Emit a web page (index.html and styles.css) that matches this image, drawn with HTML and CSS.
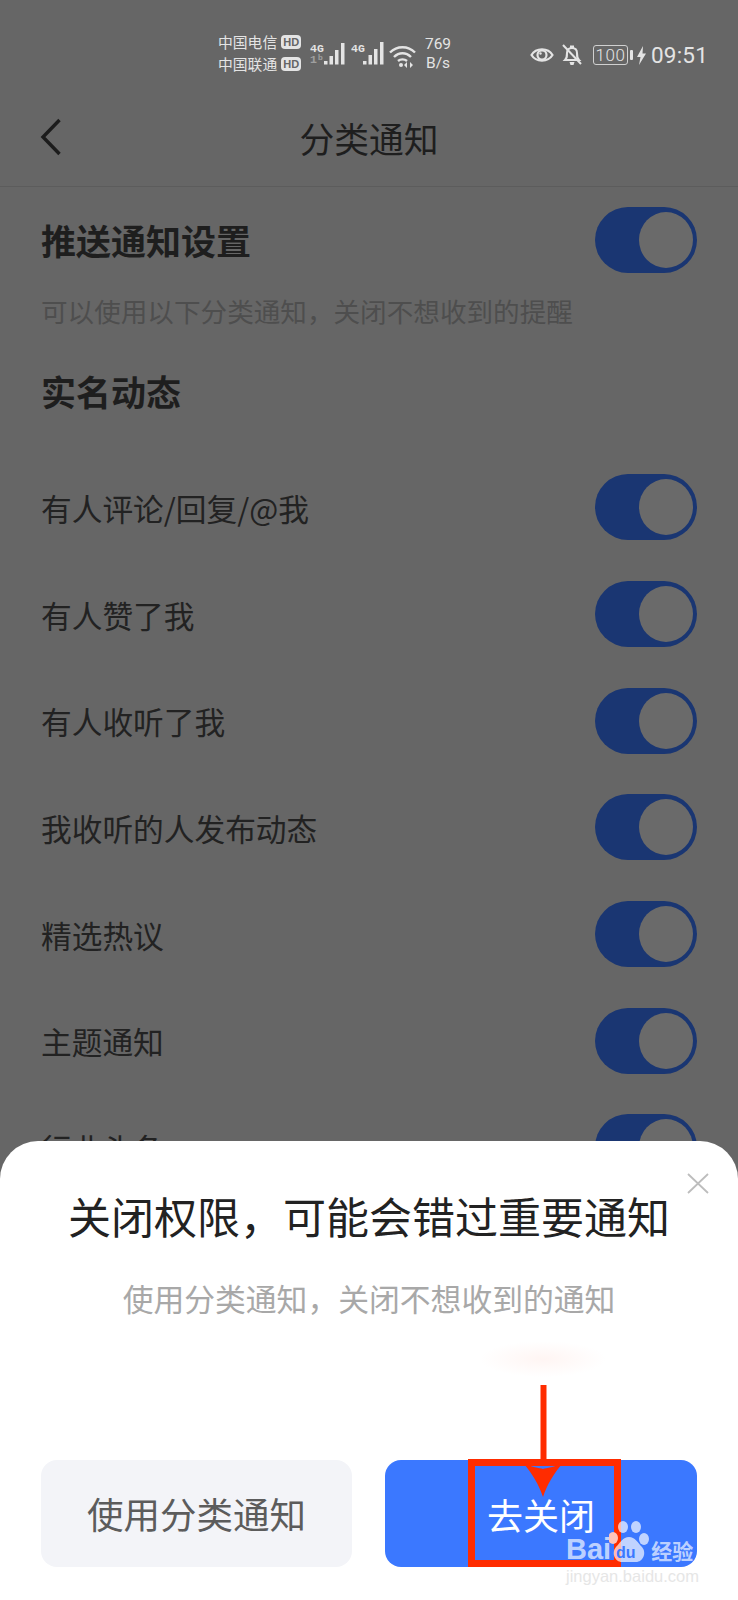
FILE: index.html
```html
<!DOCTYPE html>
<html lang="zh-CN">
<head>
<meta charset="utf-8">
<title>分类通知</title>
<link rel="stylesheet" href="styles.css">
</head>
<body>
<div class="page">
  <header class="status">
    <div class="carriers">
      <div class="carrier"><span>中国电信</span><b class="hd">HD</b></div>
      <div class="carrier"><span>中国联通</span><b class="hd">HD</b></div>
    </div>
    <svg class="signal" width="40" height="26" viewBox="0 0 40 26"><text x="0" y="11" class="tiny">4G</text><text x="0" y="22" class="tiny dim">1ᵇ</text><g fill="#e4e4e4"><rect x="14" y="20" width="3.500" height="3.500"/><rect x="19.500" y="15" width="3.500" height="8.500"/><rect x="25" y="9" width="3.500" height="14.500"/><rect x="31" y="2" width="3.500" height="21.500"/></g></svg>
    <svg class="signal" width="36" height="26" viewBox="0 0 36 26"><text x="0" y="11" class="tiny">4G</text><g fill="#e4e4e4"><rect x="12" y="20" width="3.500" height="3.500"/><rect x="17.500" y="14" width="3.500" height="9.500"/><rect x="23" y="8" width="3.500" height="15.500"/><rect x="29" y="1" width="3.500" height="22.500"/></g></svg>
    <svg class="wifi" width="27" height="24" viewBox="0 0 27 24"><g fill="none" stroke="#e4e4e4" stroke-width="2.4"><path d="M1 8.5C8 1.5 19 1.500 26 8.500"/><path d="M5 13C10 8 17 8 22 13"/><path d="M9 17C11.500 14.800 15.500 14.800 18 17"/></g><circle cx="12" cy="21" r="2" fill="#e4e4e4"/><path d="M18 18v6l-3-3zM21 18v6l3-3z" fill="#e4e4e4"/></svg>
    <div class="speed"><span>769</span><span>B/s</span></div>
    <div class="status-right">
      <svg width="24" height="18" viewBox="0 0 24 18"><path d="M1.500 9C6 1.500 18 1.500 22.500 9C18 16.500 6 16.500 1.500 9Z" fill="none" stroke="#e4e4e4" stroke-width="2.200"/><circle cx="12" cy="9" r="4.500" fill="none" stroke="#e4e4e4" stroke-width="2.200"/><circle cx="10.500" cy="7.500" r="1.200" fill="#e4e4e4"/></svg>
      <svg class="bell" width="20" height="22" viewBox="0 0 20 22"><g fill="none" stroke="#e4e4e4" stroke-width="2"><path d="M3 16h14c-2-2-2-3-2-7 0-3-2-5-5-5S5 6 5 9c0 4 0 5-2 7Z"/><path d="M1 1l18 19"/></g><path d="M8 1.500h4v2.500h-4zM7.500 18h5l-1 3h-3z" fill="#e4e4e4"/></svg>
      <div class="battery"><span>100</span></div><i class="nub"></i>
      <svg class="bolt" width="9" height="19" viewBox="0 0 9 19"><path d="M6 0L0 11h3.500L2 19l7-11.500H5.500Z" fill="#e4e4e4"/></svg>
      <span class="clock">09:51</span>
    </div>
  </header>

  <nav class="nav">
    <svg class="back" width="22" height="38" viewBox="0 0 22 38"><path d="M19.500 2L3 19l16.500 17" fill="none" stroke="#1c1c1c" stroke-width="3.400"/></svg>
    <h1>分类通知</h1>
  </nav>

  <main class="content">
    <div class="head-row"><h2>推送通知设置</h2><div class="toggle"><i></i></div></div>
    <p class="hint">可以使用以下分类通知，关闭不想收到的提醒</p>
    <h2 class="section">实名动态</h2>
    <ul class="rows">
      <li><span>有人评论/回复/@我</span><div class="toggle"><i></i></div></li>
      <li><span>有人赞了我</span><div class="toggle"><i></i></div></li>
      <li><span>有人收听了我</span><div class="toggle"><i></i></div></li>
      <li><span>我收听的人发布动态</span><div class="toggle"><i></i></div></li>
      <li><span>精选热议</span><div class="toggle"><i></i></div></li>
      <li><span>主题通知</span><div class="toggle"><i></i></div></li>
      <li><span>行业头条</span><div class="toggle"><i></i></div></li>
    </ul>
  </main>

  <section class="sheet">
    <svg class="close" width="22" height="21" viewBox="0 0 22 21"><path d="M1 1l20 19M21 1L1 20" fill="none" stroke="#bdbdbd" stroke-width="1.800"/></svg>
    <h3>关闭权限，可能会错过重要通知</h3>
    <p>使用分类通知，关闭不想收到的通知</p>
    <div class="actions">
      <button class="btn ghost">使用分类通知</button>
      <button class="btn primary">去关闭</button>
    </div>
    <div class="smudge"></div>
    <div class="redbox"></div>
    <svg class="arrow" width="44" height="114" viewBox="0 0 44 114"><path d="M19.500 0h6v80h-6z" fill="#ff2c00"/><path d="M2 78C10 82 19 83 22 84C25 83 34 82 42 78C33 88 26 100 22 112C18 100 11 88 2 78Z" fill="#ff2c00"/></svg>
    <div class="watermark">
      <div class="wm-top">
        <span class="bai">Bai</span>
        <svg class="paw" width="40" height="43" viewBox="0 0 40 43"><g fill="#fff" fill-opacity=".68"><ellipse cx="4" cy="17" rx="5" ry="6" fill="#ffc4bb" fill-opacity="1"/><ellipse cx="14" cy="6" rx="5" ry="6"/><ellipse cx="27" cy="6" rx="5" ry="6"/><ellipse cx="35" cy="18" rx="5" ry="6"/><path d="M20 16c6 0 9 6 13 10 5 6 1 15-6 15H13C6 41 2 32 7 26c4-4 7-10 13-10Z"/></g><text x="7" y="37" class="du">du</text></svg>
        <span class="jy">经验</span>
      </div>
      <div class="wm-url">jingyan.baidu.com</div>
    </div>
  </section>
</div>
</body>
</html>
```

FILE: styles.css
```css
* { box-sizing: border-box; }
html, body { margin: 0; padding: 0; }
body { font-family: "Noto Sans CJK SC", "Noto Sans", sans-serif; background: #666; }
.page { position: relative; width: 738px; height: 1600px; overflow: hidden; background: #666; color: #1e1e1e; }

/* status bar */
.status { height: 100px; padding: 30px 30px 0 218px; display: flex; align-items: flex-start; color: #e4e4e4; }
.carriers { width: 86px; padding-top: 1px; }
.carrier { display: flex; align-items: center; height: 22px; font-size: 14.800px; line-height: 22px; }
.hd { margin-left: 4px; width: 20px; height: 14px; border-radius: 4px; background: #e4e4e4; color: #666; font: bold 11px/14px "Liberation Sans", sans-serif; text-align: center; }
.signal { margin: 11px 0 0 6px; flex: none; }
.signal + .signal { margin-left: 1px; }
.wifi { margin: 14px 0 0 2px; flex: none; }
.tiny { font: bold 11.500px "Liberation Mono", monospace; fill: #e4e4e4; }
.dim { opacity: .45; }
.speed { width: 34px; margin: 5px 0 0 5px; display: flex; flex-direction: column; align-items: center; font: 15.500px/19px "Roboto", sans-serif; }
.status-right { margin-left: auto; margin-top: 10px; display: flex; align-items: center; height: 30px; }
.bell { margin-left: 8px; }
.battery { margin-left: 11px; width: 35px; height: 20px; border: 1.500px solid #d0d0d0; border-radius: 3px; display: flex; align-items: center; justify-content: center; font: 300 17px/1 "Roboto", sans-serif; letter-spacing: .5px; }
.nub { margin-left: 2px; width: 3px; height: 10px; border-radius: 1px; background: #e4e4e4; }
.bolt { margin-left: 4px; }
.clock { margin-left: 5px; font: 400 22.500px/30px "Roboto", sans-serif; letter-spacing: .2px; }

/* navigation */
.nav { position: relative; height: 87px; border-bottom: 1px solid #5c5c5c; display: flex; align-items: center; justify-content: center; padding-bottom: 10px; }
.nav h1 { margin: 0; font-size: 34.800px; line-height: 48px; font-weight: 400; }
.back { position: absolute; left: 40px; top: 18px; }

/* content */
.content { padding: 20px 41px 0; }
.head-row { display: flex; align-items: center; justify-content: space-between; }
h2 { margin: 0; font-size: 35px; line-height: 64px; font-weight: 700; }
.hint { margin: 16px 0 0; font-size: 26.600px; line-height: 44px; color: #4e4e4e; }
.section { margin-top: 34px; line-height: 48px; }
.rows { list-style: none; margin: 39px 0 0; padding: 0; }
.rows li { height: 106.700px; display: flex; align-items: center; justify-content: space-between; font-size: 30.700px; color: #222; }
.toggle { width: 102px; height: 66px; border-radius: 33px; background: #1a3672; display: flex; align-items: center; justify-content: flex-end; padding-right: 4px; flex: none; }
.toggle i { width: 54px; height: 56px; border-radius: 50%; background: #6a6a6a; }

/* sheet */
.sheet { position: absolute; left: 0; right: 0; bottom: 0; height: 459px; background: #fff; border-radius: 38px 38px 0 0; display: flex; flex-direction: column; align-items: center; }
.close { position: absolute; left: 687px; top: 32px; }
.sheet h3 { margin: 42px 0 0; font-size: 43px; line-height: 64px; font-weight: 400; color: #222; white-space: nowrap; }
.sheet p { margin: 29px 0 0; font-size: 30.800px; line-height: 44px; color: #a8a8a8; white-space: nowrap; }
.actions { position: absolute; left: 41px; right: 41px; top: 319px; display: flex; gap: 33px; }
.btn { flex: none; height: 107px; border: 0; border-radius: 16px; font-family: inherit; font-size: 36.500px; line-height: 44px; padding: 0; }
.ghost { width: 311px; background: #f3f4f8; color: #5c5c5c; }
.primary { width: 312px; background: #3b78ff; color: #fff; font-size: 36px; }
.smudge { position: absolute; left: 480px; top: 200px; width: 126px; height: 36px; border-radius: 50%; background: radial-gradient(closest-side, #fff5f3, #fff); }
.redbox { position: absolute; left: 468px; top: 318px; width: 153px; height: 108px; border: 7px solid #ff2c00; }
.arrow { position: absolute; left: 521px; top: 244px; }
.watermark { position: absolute; left: 566px; top: 380px; width: 135px; color: #fff; }
.wm-top { display: flex; align-items: flex-end; height: 43px; }
.bai { font: bold 29px/24px "Liberation Sans", sans-serif; padding-bottom: 3px; color: rgba(255,255,255,.68); }
.paw { margin: 0 0 0 -2px; flex: none; }
.du { font: bold 16px "Liberation Sans", sans-serif; fill: #3b78ff; }
.jy { margin-left: 2px; font-size: 21px; line-height: 28px; font-weight: 700; color: rgba(255,255,255,.68); }
.wm-url { margin-top: 1px; font: 16.500px/22px "Liberation Sans", sans-serif; color: #e6e6e6; white-space: nowrap; }
```
